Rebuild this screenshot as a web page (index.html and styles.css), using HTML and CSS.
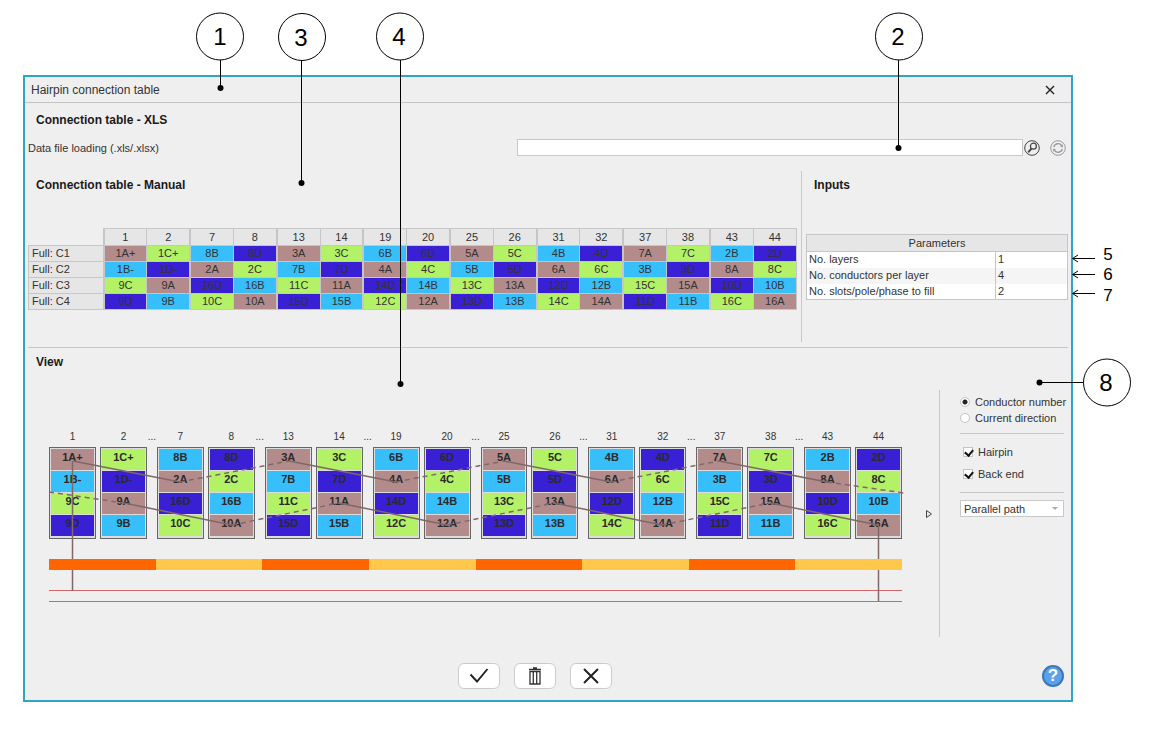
FILE: index.html
```html
<!DOCTYPE html>
<html lang="en">
  <head>
    <meta charset="UTF-8" />
    <meta name="viewport" content="width=device-width, initial-scale=1.0" />
    <title>Hairpin connection table</title>
    <link rel="stylesheet" href="styles.css">
  </head>
  <body>
    <main class="dialog">
      <header class="titlebar">
        <h1>Hairpin connection table</h1>
        <button class="close" type="button" aria-label="Close">
          <svg width="10" height="10" viewBox="0 0 10 10"><path d="M1 1L9 9M9 1L1 9" fill="none" stroke="#222" stroke-width="1.4"/></svg>
        </button>
      </header>

      <div class="content">
        <section class="xls">
          <h2>Connection table - XLS</h2>
          <div class="file-row">
            <label for="dataFile">Data file loading (.xls/.xlsx)</label>
            <input id="dataFile" class="file-input" type="text">
            <button class="round" type="button" aria-label="Browse">
              <svg width="16" height="16" viewBox="0 0 16 16" fill="none" stroke="#444"><circle cx="8" cy="8" r="7.3"/><circle cx="9.4" cy="6.2" r="3" stroke-width="1.2"/><path d="M7.6 8.4L4.2 12.4" stroke-width="1.9"/></svg>
            </button>
            <button class="round reload" type="button" aria-label="Reload">
              <svg width="16" height="16" viewBox="0 0 16 16" fill="none" stroke="#999"><circle cx="8" cy="8" r="7.3"/><path d="M3.8 7A4.4 4.4 0 0 1 11.8 5.8M12.2 9A4.4 4.4 0 0 1 4.2 10.2" stroke-width="1.3"/><path d="M12.8 4.2V7.4L10 6.6ZM3.2 11.8V8.6L6 9.4Z" fill="#999" stroke="none"/></svg>
            </button>
          </div>
        </section>

        <div class="tables">
          <section class="manual">
            <h2>Connection table - Manual</h2>
            <table class="connections">
              <thead>
                <tr><td class="corner"></td><th>1</th><th>2</th><th>7</th><th>8</th><th>13</th><th>14</th><th>19</th><th>20</th><th>25</th><th>26</th><th>31</th><th>32</th><th>37</th><th>38</th><th>43</th><th>44</th></tr>
              </thead>
              <tbody>
                <tr><th>Full: C1</th><td class="a">1A+</td><td class="c">1C+</td><td class="b">8B</td><td class="d">8D</td><td class="a">3A</td><td class="c">3C</td><td class="b">6B</td><td class="d">6D</td><td class="a">5A</td><td class="c">5C</td><td class="b">4B</td><td class="d">4D</td><td class="a">7A</td><td class="c">7C</td><td class="b">2B</td><td class="d">2D</td></tr>
                <tr><th>Full: C2</th><td class="b">1B-</td><td class="d">1D-</td><td class="a">2A</td><td class="c">2C</td><td class="b">7B</td><td class="d">7D</td><td class="a">4A</td><td class="c">4C</td><td class="b">5B</td><td class="d">5D</td><td class="a">6A</td><td class="c">6C</td><td class="b">3B</td><td class="d">3D</td><td class="a">8A</td><td class="c">8C</td></tr>
                <tr><th>Full: C3</th><td class="c">9C</td><td class="a">9A</td><td class="d">16D</td><td class="b">16B</td><td class="c">11C</td><td class="a">11A</td><td class="d">14D</td><td class="b">14B</td><td class="c">13C</td><td class="a">13A</td><td class="d">12D</td><td class="b">12B</td><td class="c">15C</td><td class="a">15A</td><td class="d">10D</td><td class="b">10B</td></tr>
                <tr><th>Full: C4</th><td class="d">9D</td><td class="b">9B</td><td class="c">10C</td><td class="a">10A</td><td class="d">15D</td><td class="b">15B</td><td class="c">12C</td><td class="a">12A</td><td class="d">13D</td><td class="b">13B</td><td class="c">14C</td><td class="a">14A</td><td class="d">11D</td><td class="b">11B</td><td class="c">16C</td><td class="a">16A</td></tr>
              </tbody>
            </table>
          </section>

          <section class="inputs">
            <h2>Inputs</h2>
            <table class="params">
              <colgroup><col><col class="value"></colgroup>
              <thead>
                <tr><th colspan="2">Parameters</th></tr>
              </thead>
              <tbody>
                <tr><td>No. layers</td><td>1</td></tr>
                <tr><td>No. conductors per layer</td><td>4</td></tr>
                <tr><td>No. slots/pole/phase to fill</td><td>2</td></tr>
              </tbody>
            </table>
          </section>
        </div>

        <section class="view">
          <h2>View</h2>
          <div class="view-body">
            <div class="diagram">
              <div class="slots">
                <div class="slot"><span class="num">1</span><div class="frame"><b class="a">1A+</b><b class="b">1B-</b><b class="c">9C</b><b class="d">9D</b></div></div>
                <div class="slot"><span class="num">2</span><div class="frame"><b class="c">1C+</b><b class="d">1D-</b><b class="a">9A</b><b class="b">9B</b></div></div>
                <span class="dots">...</span>
                <div class="slot"><span class="num">7</span><div class="frame"><b class="b">8B</b><b class="a">2A</b><b class="d">16D</b><b class="c">10C</b></div></div>
                <div class="slot"><span class="num">8</span><div class="frame"><b class="d">8D</b><b class="c">2C</b><b class="b">16B</b><b class="a">10A</b></div></div>
                <span class="dots">...</span>
                <div class="slot"><span class="num">13</span><div class="frame"><b class="a">3A</b><b class="b">7B</b><b class="c">11C</b><b class="d">15D</b></div></div>
                <div class="slot"><span class="num">14</span><div class="frame"><b class="c">3C</b><b class="d">7D</b><b class="a">11A</b><b class="b">15B</b></div></div>
                <span class="dots">...</span>
                <div class="slot"><span class="num">19</span><div class="frame"><b class="b">6B</b><b class="a">4A</b><b class="d">14D</b><b class="c">12C</b></div></div>
                <div class="slot"><span class="num">20</span><div class="frame"><b class="d">6D</b><b class="c">4C</b><b class="b">14B</b><b class="a">12A</b></div></div>
                <span class="dots">...</span>
                <div class="slot"><span class="num">25</span><div class="frame"><b class="a">5A</b><b class="b">5B</b><b class="c">13C</b><b class="d">13D</b></div></div>
                <div class="slot"><span class="num">26</span><div class="frame"><b class="c">5C</b><b class="d">5D</b><b class="a">13A</b><b class="b">13B</b></div></div>
                <span class="dots">...</span>
                <div class="slot"><span class="num">31</span><div class="frame"><b class="b">4B</b><b class="a">6A</b><b class="d">12D</b><b class="c">14C</b></div></div>
                <div class="slot"><span class="num">32</span><div class="frame"><b class="d">4D</b><b class="c">6C</b><b class="b">12B</b><b class="a">14A</b></div></div>
                <span class="dots">...</span>
                <div class="slot"><span class="num">37</span><div class="frame"><b class="a">7A</b><b class="b">3B</b><b class="c">15C</b><b class="d">11D</b></div></div>
                <div class="slot"><span class="num">38</span><div class="frame"><b class="c">7C</b><b class="d">3D</b><b class="a">15A</b><b class="b">11B</b></div></div>
                <span class="dots">...</span>
                <div class="slot"><span class="num">43</span><div class="frame"><b class="b">2B</b><b class="a">8A</b><b class="d">10D</b><b class="c">16C</b></div></div>
                <div class="slot"><span class="num">44</span><div class="frame"><b class="d">2D</b><b class="c">8C</b><b class="b">10B</b><b class="a">16A</b></div></div>
              </div>
              <!-- hairpins are solid, back end connections are dashed -->
              <svg class="wires" viewBox="0 0 853 155" preserveAspectRatio="none">
                <g class="hairpin">
                  <path d="M24 14L131 35M240 14L347 35M455 14L562 35M670 14L778 35"/>
                  <path d="M75 56L183 78M290 56L398 78M505 56L613 78M721 56L829 78"/>
                  <path d="M23.500 14V144M829.500 78V154.500"/>
                </g>
                <g class="backend">
                  <path d="M131 35L240 14M347 35L455 14M562 35L670 14M778 35L855 46"/>
                  <path d="M0 45L75 56M183 78L290 56M398 78L505 56M613 78L721 56"/>
                </g>
              </svg>
              <div class="poles"><i></i><i></i><i></i><i></i><i></i><i></i><i></i><i></i></div>
              <div class="rails"></div>
            </div>

            <button class="next" type="button" aria-label="Show more">
              <svg width="8" height="10" viewBox="0 0 8 10"><path d="M1.500 1.500L6.500 5L1.500 8.500Z" fill="none" stroke="#444"/></svg>
            </button>

            <form class="options">
              <label class="radio"><input type="radio" name="show" checked>Conductor number</label>
              <label class="radio"><input type="radio" name="show">Current direction</label>
              <hr>
              <label class="check"><input type="checkbox" checked>Hairpin</label>
              <label class="check"><input type="checkbox" checked>Back end</label>
              <hr>
              <div class="select">
                <select aria-label="Path"><option>Parallel path</option></select>
              </div>
            </form>
          </div>
        </section>

        <footer class="footer">
          <div class="actions">
            <button class="action" type="button" aria-label="OK">
              <svg width="20" height="18" viewBox="0 0 20 18"><path d="M1.500 7.500L8 14.500L18.500 2" fill="none" stroke="#222" stroke-width="1.9"/></svg>
            </button>
            <button class="action" type="button" aria-label="Delete">
              <svg width="14" height="18" viewBox="0 0 14 18" fill="none" stroke="#333"><path d="M1 2.500H13M5 1H9" stroke-width="1.500"/><path d="M2 4.500H12V17H2ZM5.300 4.500V17M8.700 4.500V17" stroke-width="1.300"/></svg>
            </button>
            <button class="action" type="button" aria-label="Cancel">
              <svg width="18" height="18" viewBox="0 0 18 18"><path d="M2 2L16 16M16 2L2 16" fill="none" stroke="#222" stroke-width="2"/></svg>
            </button>
          </div>
          <button class="help" type="button" aria-label="Help">?</button>
        </footer>
      </div>
    </main>

    <!-- numbered callouts -->
    <svg class="callouts" width="1151" height="731" viewBox="0 0 1151 731">
      <g class="ring">
        <circle cx="220" cy="36.500" r="23.500"/>
        <circle cx="302" cy="37" r="23.500"/>
        <circle cx="400" cy="36.500" r="23.500"/>
        <circle cx="899" cy="36.500" r="23.500"/>
        <circle cx="1107" cy="382.500" r="23.500"/>
      </g>
      <path class="lead" d="M220.500 60V88M301.500 60.500V183M400.500 60V384M898.500 60V148M1083.500 382.500H1040"/>
      <circle cx="220.500" cy="88" r="3"/>
      <circle cx="301.500" cy="183" r="3"/>
      <circle cx="400.500" cy="384" r="3"/>
      <circle cx="898.500" cy="148" r="3"/>
      <circle cx="1039.500" cy="382.500" r="3"/>
      <path class="lead" d="M1095 258.500H1073M1078 255L1072.500 258.500L1078 262M1095 274.500H1073M1078 271L1072.500 274.500L1078 278M1095 293.500H1073M1078 290L1072.500 293.500L1078 297"/>
      <g class="big">
        <text x="220" y="45">1</text>
        <text x="301" y="46">3</text>
        <text x="399" y="45">4</text>
        <text x="898" y="45">2</text>
        <text x="1106" y="391">8</text>
      </g>
      <g class="small">
        <text x="1108" y="260">5</text>
        <text x="1108" y="280">6</text>
        <text x="1108" y="301">7</text>
      </g>
    </svg>
  </body>
</html>
```
FILE: styles.css
```css
* {
  box-sizing: border-box;
}
body {
  position: relative;
  margin: 0;
  padding: 75px 78px 29px 23px;
  background: #fff;
  color: #333;
  font-family: "Liberation Sans", Arial, sans-serif;
  font-size: 11px;
}
button, input, select {
  font: inherit;
  color: inherit;
}
button {
  display: flex;
  align-items: center;
  justify-content: center;
  padding: 0;
  border: 0;
  background: none;
}
.dialog {
  border: 2px solid #2fa5c4;
  background: #efefef;
}
.titlebar {
  display: flex;
  align-items: center;
  justify-content: space-between;
  height: 26px;
  padding: 0 16px 0 6px;
  border-bottom: 1px solid #c4c4c4;
}
h1 {
  margin: 0;
  font-size: 12px;
  font-weight: normal;
}
h2 {
  margin: 0;
  padding-left: 8px;
  color: #1a1a1a;
  font-size: 12px;
  line-height: 28px;
}
.content {
  padding: 3px 3px 11px;
}

/* file row */
.file-row {
  display: flex;
  align-items: center;
  margin-top: 5px;
  height: 17px;
}
.file-row label {
  width: 47%;
}
.file-input {
  flex: 1;
  height: 17px;
  border: 1px solid #c8c8c8;
  background: #fff;
}
.round {
  width: 16px;
  height: 16px;
  margin-left: 1px;
}
.reload {
  margin-left: 10px;
  margin-right: 2px;
}

/* tables */
.tables {
  display: flex;
  margin-top: 15px;
  padding-bottom: 5px;
  border-bottom: 1px solid #c8c8c8;
}
.manual {
  flex: 1;
  padding-right: 4px;
  min-height: 171px;
}
.inputs {
  width: 267px;
  padding-left: 4px;
  border-left: 1px solid #c8c8c8;
}
table {
  width: 100%;
  table-layout: fixed;
  border-collapse: collapse;
}
th, td {
  height: 16px;
  padding: 0;
  border: 1px solid #c6c6c6;
  font-weight: normal;
  line-height: 15px;
}
th {
  background: #e6e6e6;
}
.connections {
  margin-top: 29px;
  text-align: center;
}
.connections thead th {
  height: 17px;
}
.connections th:nth-child(even), .connections td:nth-child(even) {
  border-left-width: 2px;
}
.connections .corner {
  width: 75px;
  border-top-color: transparent;
  border-left-color: transparent;
}
.connections tbody th {
  padding-left: 3px;
  text-align: left;
}
.params {
  margin-top: 35px;
  background: #fff;
}
.params td {
  padding-left: 2px;
  border-top: 0;
  border-bottom: 0;
}
.params tbody {
  border-bottom: 1px solid #c6c6c6;
}
.params tr:nth-child(even) td {
  background: #f5f5f5;
}
.params .value {
  width: 72px;
}
.params thead th {
  height: 17px;
}
.a {
  background: #b48b8b;
}
.b {
  background: #37bffb;
}
.c {
  background: #b3f166;
}
.d {
  background: #3920d5;
}

/* view */
.view-body {
  display: flex;
  margin-top: 14px;
  min-height: 247px;
}
.diagram {
  position: relative;
  flex: 1;
  padding-top: 41px;
  margin-left: 21px;
}
.slots {
  display: flex;
}
.slot {
  flex: 1;
  text-align: center;
}
.slot + .slot {
  margin-left: 4px;
}
.num, .dots {
  display: block;
  height: 16px;
  font-size: 10px;
  line-height: 12px;
}
.dots {
  width: 10px;
  text-align: center;
}
.frame {
  padding: 1px;
  border: 1px solid #666;
  background: #ddd;
}
.frame b {
  display: block;
  height: 22px;
  border: 1px solid #ddd;
  border-width: 0 0 1px;
  color: #2a2a2a;
  line-height: 16px;
}
.wires {
  position: absolute;
  top: 57px;
  left: 0;
  width: 100%;
  height: 155px;
  overflow: visible;
  fill: none;
  stroke: #806868;
  stroke-width: 1.5;
}
.backend {
  stroke-dasharray: 5 4;
}
.poles {
  position: relative;
  display: flex;
  height: 11px;
  margin-top: 20px;
}
.poles i {
  flex: 1;
  background: #ffc84a;
}
.poles i:nth-child(odd) {
  background: #ff6600;
}
.rails {
  height: 12px;
  margin-top: 20px;
  border-top: 1px solid #cf6a6a;
  border-bottom: 1px solid #cf6a6a;
}
.next {
  width: 37px;
  padding-left: 16px;
}
.options {
  width: 129px;
  padding: 4px 4px 0 20px;
  border-left: 1px solid #c8c8c8;
}
.options label {
  display: flex;
  align-items: center;
  white-space: nowrap;
}
.options input {
  appearance: none;
  flex: none;
  width: 10px;
  height: 10px;
  margin: 0;
  border: 1px solid #c4c4c4;
  background: #fff;
}
.radio {
  gap: 5px;
  height: 16px;
}
.radio input {
  border-radius: 50%;
}
.radio input:checked {
  background: radial-gradient(circle, #222 2px, #fff 3px);
}
.check {
  gap: 5px;
  height: 22px;
  padding-left: 3px;
}
.check input:checked::before {
  content: "";
  display: block;
  width: 4px;
  height: 6px;
  margin-left: 2px;
  border: solid #111;
  border-width: 0 2px 2px 0;
  transform: rotate(40deg);
}
hr {
  margin: 7px 0;
  border: 0;
  border-top: 1px solid #c8c8c8;
}
.options .check + .check {
  margin-bottom: 7px;
}
.select {
  position: relative;
}
.select::after {
  content: "";
  position: absolute;
  top: 7px;
  right: 6px;
  border: 3px solid transparent;
  border-top-color: #aaa;
}
select {
  appearance: none;
  display: block;
  width: 100%;
  height: 17px;
  padding: 0 3px;
  border: 1px solid #c8c8c8;
  border-radius: 0;
  background: #fff;
}

/* footer */
.footer {
  display: flex;
  align-items: center;
  margin-top: 26px;
  padding-right: 4px;
}
.actions {
  display: flex;
  flex: 1;
  justify-content: center;
  gap: 14px;
}
.action {
  width: 42px;
  height: 26px;
  border: 1px solid #ccc;
  border-radius: 6px;
  background: #fff;
}
.help {
  width: 22px;
  height: 22px;
  border: 2px solid #3a78bd;
  border-radius: 50%;
  background: #5ba0ea;
  color: #fff;
  font-size: 17px;
  font-weight: bold;
}

/* callouts lie over the dialog */
.callouts {
  position: absolute;
  top: 0;
  left: 0;
  pointer-events: none;
}
.ring {
  fill: #fff;
  stroke: #000;
}
.lead {
  fill: none;
  stroke: #000;
}
.big, .small {
  text-anchor: middle;
  font-size: 24px;
}
.small {
  font-size: 17px;
}
```
